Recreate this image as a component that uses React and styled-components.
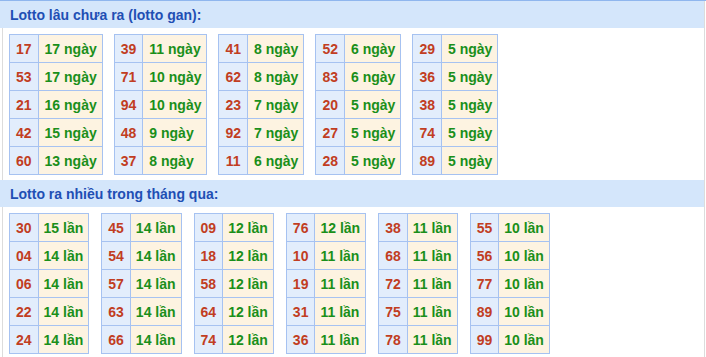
import React from 'react';
import styled, { createGlobalStyle } from 'styled-components';

const GlobalStyle = createGlobalStyle`
  body {
    margin: 0;
    background: #fff;
    font-family: 'Liberation Sans', Arial, sans-serif;
  }
`;

const Page = styled.div`
  width: 706px;
  border-top: 1px solid #8fb6ee;
`;

const Box = styled.div`
  margin: 0 1px 0 2px;
  border-left: 1px solid #dcdcdc;
  border-right: 1px solid #dcdcdc;
`;

const Header = styled.div`
  height: 27px;
  margin-left: -3px;
  padding-left: 10px;
  display: flex;
  align-items: center;
  background: #d4e6fb;
  color: #1f4fb4;
  font-size: 14px;
  font-weight: bold;
`;

const Tables = styled.div`
  display: flex;
  align-items: flex-start;
  gap: ${p => p.gap}px;
  padding: 6px 6px 5px;
`;

const Table = styled.table`
  border-collapse: collapse;
  font-size: 14px;
  font-weight: bold;
`;

const NumCell = styled.td`
  height: 27px;
  padding: 0 6px;
  border: 1px solid #a6c2f1;
  text-align: center;
  background: #e2edfc;
  color: #c13d22;
`;

const CountCell = styled.td`
  height: 27px;
  padding: 0 ${p => p.padR}px 0 ${p => p.padL}px;
  border: 1px solid #a6c2f1;
  white-space: nowrap;
  background: #fdf3e1;
  color: #1a8f1a;
`;

const gan = [
  [['17', 17], ['53', 17], ['21', 16], ['42', 15], ['60', 13]],
  [['39', 11], ['71', 10], ['94', 10], ['48', 9], ['37', 8]],
  [['41', 8], ['62', 8], ['23', 7], ['92', 7], ['11', 6]],
  [['52', 6], ['83', 6], ['20', 5], ['27', 5], ['28', 5]],
  [['29', 5], ['36', 5], ['38', 5], ['74', 5], ['89', 5]],
];

const nhieu = [
  [['30', 15], ['04', 14], ['06', 14], ['22', 14], ['24', 14]],
  [['45', 14], ['54', 14], ['57', 14], ['63', 14], ['66', 14]],
  [['09', 12], ['18', 12], ['58', 12], ['64', 12], ['74', 12]],
  [['76', 12], ['10', 11], ['19', 11], ['31', 11], ['36', 11]],
  [['38', 11], ['68', 11], ['72', 11], ['75', 11], ['78', 11]],
  [['55', 10], ['56', 10], ['77', 10], ['89', 10], ['99', 10]],
];

const Section = ({ title, data, unit, gap, padL, padR }) => (
  <>
    <Header>{title}</Header>
    <Tables gap={gap}>
      {data.map((rows, i) => (
        <Table key={i}>
          <tbody>
            {rows.map(([n, c]) => (
              <tr key={n}>
                <NumCell>{n}</NumCell>
                <CountCell padL={padL} padR={padR}>{c} {unit}</CountCell>
              </tr>
            ))}
          </tbody>
        </Table>
      ))}
    </Tables>
  </>
);

export default function App() {
  return (
    <Page>
      <GlobalStyle />
      <Box>
        <Section title="Lotto lâu chưa ra (lotto gan):" data={gan} unit="ngày" gap={11} padL={6} padR={5} />
        <Section title="Lotto ra nhiều trong tháng qua:" data={nhieu} unit="lần" gap={12} padL={5} padR={5} />
      </Box>
    </Page>
  );
}
